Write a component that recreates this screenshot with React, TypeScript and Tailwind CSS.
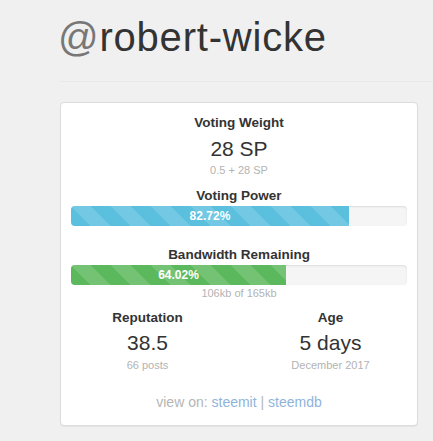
const stripes =
  "bg-[linear-gradient(45deg,rgba(255,255,255,.15)_25%,transparent_25%,transparent_50%,rgba(255,255,255,.15)_50%,rgba(255,255,255,.15)_75%,transparent_75%,transparent)] bg-size-[40px_40px]";

function Bar({ value, color }: { value: number; color: string }) {
  return (
    <div className="h-[20px] w-full overflow-hidden rounded-[4px] bg-[#f5f5f5] shadow-[inset_0_1px_2px_rgba(0,0,0,0.1)]">
      <div
        className={`flex h-full items-center justify-center text-[12px] font-bold leading-[20px] text-white ${color} ${stripes}`}
        style={{ width: `${value}%` }}
      >
        {value.toFixed(2)}%
      </div>
    </div>
  );
}

function Stat({ title, value, note }: { title: string; value: string; note: string }) {
  return (
    <div className="text-center">
      <div className="mt-[8px] text-[13.5px] font-bold leading-[20px] text-[#333]">{title}</div>
      <div className="mt-[2px] text-[21px] leading-[26px] text-[#333]">{value}</div>
      <div className="mt-[2px] text-[11px] leading-[14px] text-[#b3b3b3]">{note}</div>
    </div>
  );
}

export default function App() {
  return (
    <div className="min-h-screen bg-[#f0f0f0] pl-[60px] font-['Liberation_Sans',Arial,sans-serif]">
      <h1 className="-ml-[2px] pt-[15px] text-[40px] leading-[44px] tracking-[0.8px] text-[#333]">
        <span className="text-[#777]">@</span>robert-wicke
      </h1>
      <hr className="mt-[22px] border-t border-[#e8e8e8]" />

      <div className="mr-[15px] mt-[20px] rounded-[4px] border border-[#dcdcdc] bg-white px-[10px] pb-[13px] pt-[10px] text-center shadow-[0_1px_1px_rgba(0,0,0,0.05)]">
        <div className="text-[13.5px] font-bold leading-[20px] text-[#333]">Voting Weight</div>
        <div className="mt-[3px] text-[21px] leading-[26px] text-[#333]">28 SP</div>
        <div className="mt-[1px] text-[11px] leading-[14px] text-[#b3b3b3]">0.5 + 28 SP</div>

        <div className="mt-[9px] text-[13.5px] font-bold leading-[20px] text-[#333]">Voting Power</div>
        <Bar value={82.72} color="bg-[#5bc0de]" />

        <div className="mt-[19px] text-[13.5px] font-bold leading-[20px] text-[#333]">Bandwidth Remaining</div>
        <Bar value={64.02} color="bg-[#5cb85c]" />
        <div className="mt-[1px] text-[11px] leading-[14px] text-[#b3b3b3]">106kb of 165kb</div>

        <div className="-mx-[15px] grid grid-cols-2">
          <Stat title="Reputation" value="38.5" note="66 posts" />
          <Stat title="Age" value="5 days" note="December 2017" />
        </div>

        <div className="mt-[20px] text-[14px] leading-[20px] text-[#b5b5b5]">
          view on:{" "}
          <a href="#" className="text-[#8fb4db]">
            steemit
          </a>{" "}
          |{" "}
          <a href="#" className="text-[#8fb4db]">
            steemdb
          </a>
        </div>
      </div>
    </div>
  );
}
